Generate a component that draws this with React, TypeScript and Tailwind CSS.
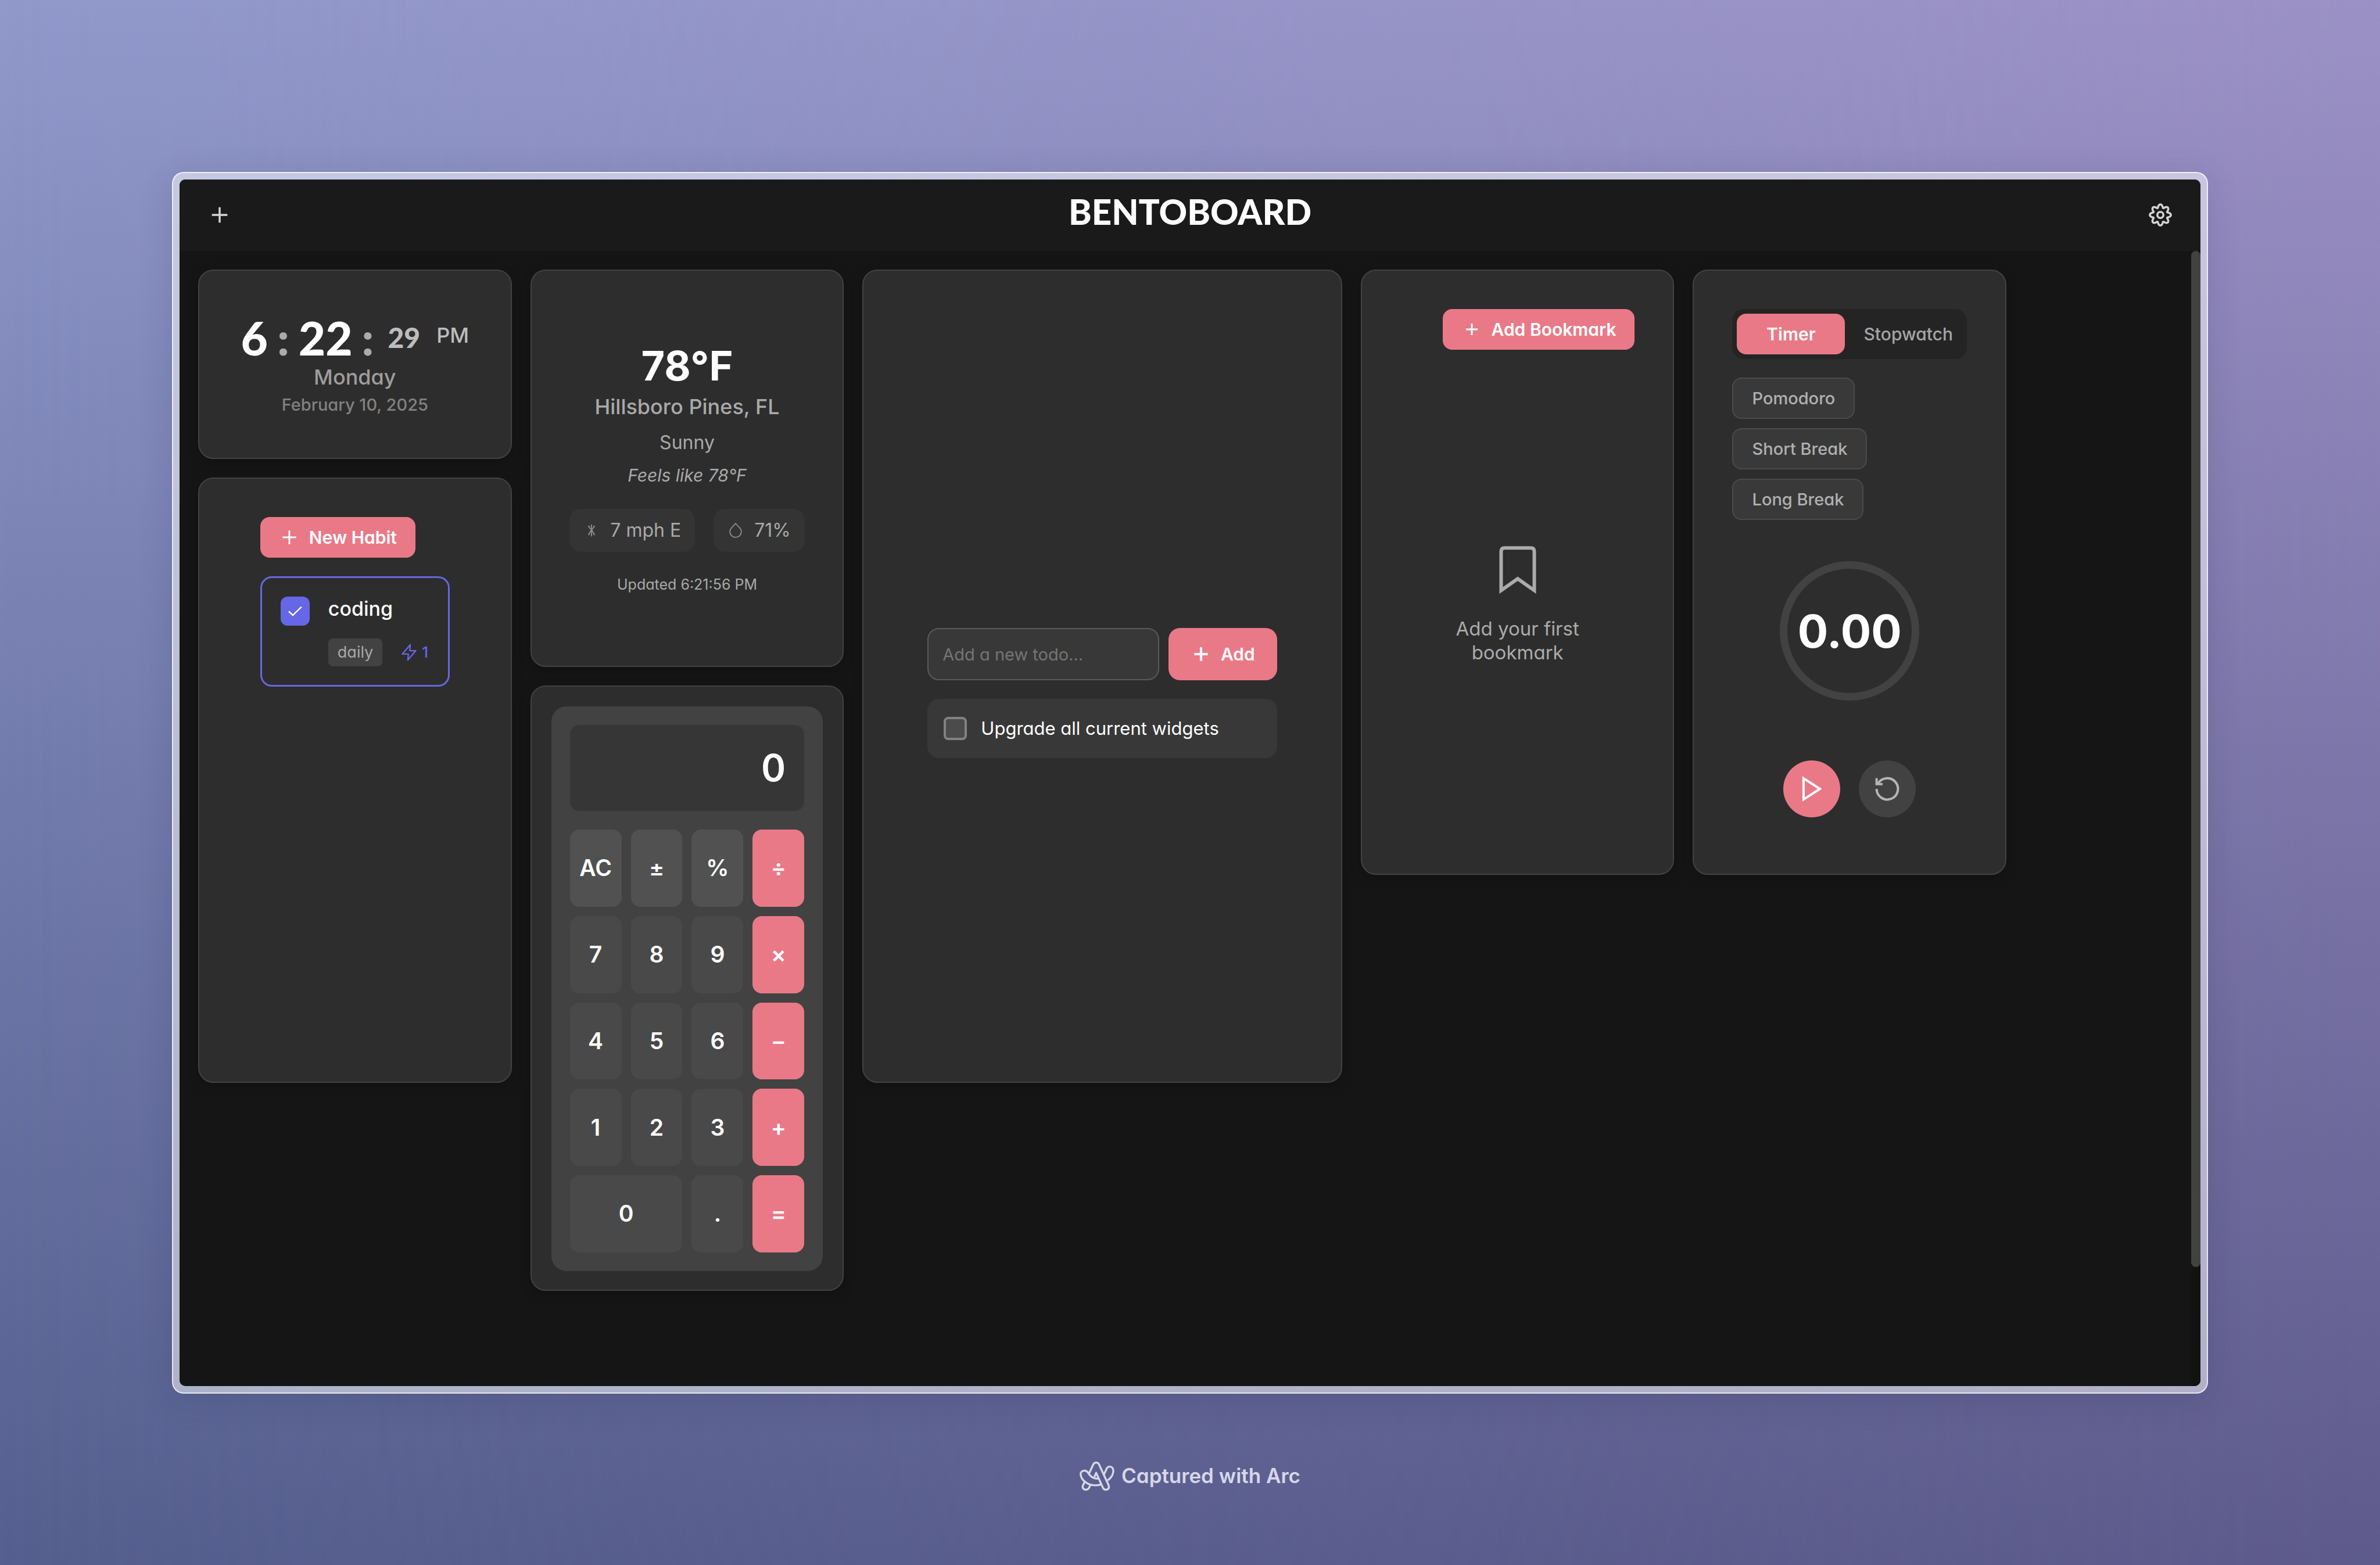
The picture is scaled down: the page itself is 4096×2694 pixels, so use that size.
import React from "react";

type IconProps = { className?: string };

function PlusIcon({ className, weight = 2 }: IconProps & { weight?: number }) {
  return (
    <svg viewBox="0 0 24 24" className={className} fill="none" stroke="currentColor" strokeWidth={weight} aria-hidden="true">
      <path d="M12 2v20M2 12h20" />
    </svg>
  );
}

function GearIcon({ className }: IconProps) {
  const points: string[] = [];
  for (let i = 0; i < 240; i++) {
    const t = (i / 240) * Math.PI * 2;
    const r = 19.2 + 3.4 * Math.cos(8 * t);
    const a = t + 0.035 * Math.sin(8 * t);
    points.push(`${(25 + r * Math.sin(a)).toFixed(2)},${(25 - r * Math.cos(a)).toFixed(2)}`);
  }
  return (
    <svg viewBox="0 0 50 50" className={className} fill="none" stroke="currentColor" strokeWidth="4.400" strokeLinejoin="round" aria-hidden="true">
      <polygon points={points.join(" ")} />
      <circle cx="25" cy="25" r="6.500" />
    </svg>
  );
}

function WindIcon({ className }: IconProps) {
  return (
    <svg viewBox="0 0 28 28" className={className} fill="none" stroke="currentColor" strokeWidth="2.500" aria-hidden="true">
      <path d="M14 1v26M7 4l1.500 1.500C10 8 11 11 14 13.500C17 11 18 8 19.500 5.500L21 4M7 24l1.500-1.500C10 19 11 16 14 13.500C17 16 18 19 19.500 22.500L21 24" />
      <path d="M7 7l3-2.500M21 7l-3-2.500M7 21l3 2.500M21 21l-3 2.500" strokeWidth="1.500" />
    </svg>
  );
}

function DropIcon({ className }: IconProps) {
  return (
    <svg viewBox="0 0 28 34" className={className} fill="none" stroke="currentColor" strokeWidth="2.200" aria-hidden="true">
      <path d="M14 2.500L21.500 10.500C24 13 26 16 26 19.500A12 12 0 0 1 2 19.500C2 16 4 13 6.500 10.500Z" />
    </svg>
  );
}

function BoltIcon({ className }: IconProps) {
  return (
    <svg viewBox="0 0 32 36" className={className} fill="none" stroke="currentColor" strokeWidth="2.800" strokeLinejoin="round" aria-hidden="true">
      <path d="M18.500 2L2 21.500H14.500L13.500 34L30 14.500H17.500Z" />
    </svg>
  );
}

function CheckIcon({ className }: IconProps) {
  return (
    <svg viewBox="0 0 24 18" className={className} fill="none" stroke="currentColor" strokeWidth="2.400" aria-hidden="true">
      <path d="M1 9.500L8 16L23 1.500" />
    </svg>
  );
}

function BookmarkIcon({ className }: IconProps) {
  return (
    <svg viewBox="0 0 79 102" className={className} fill="none" stroke="currentColor" strokeWidth="7.500" aria-hidden="true">
      <path d="M4 95V11.500Q4 4 11.500 4H67.500Q75 4 75 11.500V95L39.500 70Z" />
    </svg>
  );
}

function PlayIcon({ className }: IconProps) {
  return (
    <svg viewBox="0 0 42 55" className={className} fill="none" stroke="currentColor" strokeWidth="5" aria-hidden="true">
      <path d="M2.500 4.800V50.200L37.500 27.500Z" />
    </svg>
  );
}

function ResetIcon({ className }: IconProps) {
  return (
    <svg viewBox="-26 -26 52 52" className={className} fill="none" stroke="currentColor" strokeWidth="5" aria-hidden="true">
      <path d="M-22.700 0A22.700 22.700 0 1 0 -19.700 -11.300" />
      <path d="M-22.700 -23V-10.300H-10" />
    </svg>
  );
}

function ArcLogo({ className }: IconProps) {
  return (
    <svg viewBox="0 0 74 62" className={className} fill="none" stroke="currentColor" strokeWidth="4.200" strokeLinejoin="round" aria-hidden="true">
      <path d="M20 25.500L28.700 6.700C31.500 0.500 38.800 0.500 41.600 6.700L61.500 50C64 56 61 60 56.500 60C53 60 51 58.800 49.500 55.700L35.200 24L31.200 33" />
      <path d="M40.500 36C30 37.500 22.500 31.500 18 24C13 16 1 19 2.100 27.500C3 39 16 50.500 33 50.700Q40 50.700 46 48.500" />
      <path d="M10.400 43.500L7.400 50C4.500 56 8 60 13 60C16.500 60 18.800 58.500 20.300 55.300L23.300 49.500" />
      <path d="M52 27.500L57.300 15.500C60 9.500 66 9.700 69.500 13C73 17 72 23 69.800 28.500Q66 36 59.500 40" />
    </svg>
  );
}

const CARD =
  "rounded-[26px] border-2 border-[#424242] bg-[#2d2d2d] shadow-[0_6px_20px_rgba(0,0,0,0.2)] min-w-0";
const SMALL_PRIMARY =
  "flex h-[70px] items-center gap-4 rounded-2xl bg-[#ea7987] px-8 text-[30px] leading-10 font-semibold text-white";

function ClockCard() {
  return (
    <section className={`${CARD} col-span-2 flex flex-col items-center justify-center pb-1`}>
      <div className="flex items-center justify-center gap-4 font-['Lato',sans-serif] text-[80px] leading-[88px] font-black text-white">
        <span>6</span>
        <span className="text-[#ababab]">:</span>
        <span>22</span>
        <span className="text-[#ababab]">:</span>
        <span className="pl-2 text-[48px] text-[#bcbcbc]">29</span>
        <span className="pb-2 pl-3 font-['Inter',sans-serif] text-[36px] font-medium text-[#bcbcbc]">PM</span>
      </div>
      <p className="text-[36px] leading-10 font-medium text-[#9d9d9d]">Monday</p>
      <p className="mt-2 text-[29px] leading-10 font-medium text-[#818181]">February 10, 2025</p>
    </section>
  );
}

function HabitCard() {
  return (
    <section className={`${CARD} col-span-2 row-span-3 flex flex-col items-center py-[66px]`}>
      <div className="flex w-[326px] flex-col items-start gap-8">
        <button type="button" className={SMALL_PRIMARY}>
          <PlusIcon className="size-9 p-1" weight={2.5} />
          New Habit
        </button>
        <div className="flex w-full items-start gap-8 rounded-[20px] border-[3px] border-[#6667e2] p-8">
          <span className="relative grid size-[50px] shrink-0 place-items-center">
            <input
              id="habit-coding"
              type="checkbox"
              defaultChecked
              className="size-[50px] appearance-none rounded-xl bg-[#6667e6]"
            />
            <CheckIcon className="pointer-events-none absolute w-6 text-white" />
          </span>
          <div className="min-w-0 flex-1">
            <label htmlFor="habit-coding" className="block text-[34px] leading-[42px] font-medium text-white">
              coding
            </label>
            <div className="mt-[30px] flex items-center gap-8">
              <span className="rounded-lg bg-[#424242] px-4 py-1 text-[27px] leading-10 text-[#a9a9a9]">daily</span>
              <span className="flex items-center gap-2 text-[26px] leading-10 font-medium text-[#6667e2]">
                <BoltIcon className="h-[30px] w-7" />1
              </span>
            </div>
          </div>
        </div>
      </div>
    </section>
  );
}

function WeatherCard() {
  return (
    <section className={`${CARD} col-span-2 row-span-2 flex flex-col items-center justify-center text-[#a9a9a9]`}>
      <p className="text-[70px] leading-[80px] font-bold text-white">78°F</p>
      <p className="mt-2 text-[36px] leading-11 font-medium">Hillsboro Pines, FL</p>
      <p className="mt-5 text-[32px] leading-10">Sunny</p>
      <p className="mt-[18px] text-[30px] leading-9 italic">Feels like 78°F</p>
      <div className="mt-10 flex gap-8">
        <span className="flex h-[74px] items-center gap-[18px] rounded-[20px] bg-[#343434] px-6 text-[32px]">
          <WindIcon className="size-7 p-[3px] text-[#8a8a8a]" />7 mph E
        </span>
        <span className="flex h-[74px] items-center gap-[18px] rounded-[20px] bg-[#343434] px-6 text-[32px]">
          <DropIcon className="h-7 w-7 text-[#8a8a8a]" />
          71%
        </span>
      </div>
      <p className="mt-10 text-[25px] leading-8">Updated 6:21:56 PM</p>
    </section>
  );
}

const KEYS: { label: string; kind: "fn" | "num" | "op"; wide?: boolean }[] = [
  { label: "AC", kind: "fn" },
  { label: "±", kind: "fn" },
  { label: "%", kind: "fn" },
  { label: "÷", kind: "op" },
  { label: "7", kind: "num" },
  { label: "8", kind: "num" },
  { label: "9", kind: "num" },
  { label: "×", kind: "op" },
  { label: "4", kind: "num" },
  { label: "5", kind: "num" },
  { label: "6", kind: "num" },
  { label: "−", kind: "op" },
  { label: "1", kind: "num" },
  { label: "2", kind: "num" },
  { label: "3", kind: "num" },
  { label: "+", kind: "op" },
  { label: "0", kind: "num", wide: true },
  { label: ".", kind: "num" },
  { label: "=", kind: "op" },
];

const KEY_COLORS = { fn: "bg-[#515151]", num: "bg-[#494949]", op: "bg-[#ea7987]" };

function CalculatorCard() {
  return (
    <section className={`${CARD} col-span-2 row-span-3 flex px-[34px] pt-[34px] pb-8`}>
      <div className="flex flex-1 flex-col gap-8 rounded-[26px] bg-[#424242] p-8">
        <output className="flex h-[148px] items-center justify-end rounded-2xl bg-[#363636] px-8 text-[64px] font-semibold text-white">
          0
        </output>
        <div className="grid flex-1 auto-rows-fr grid-cols-4 gap-4">
          {KEYS.map((k) => (
            <button
              key={k.label}
              type="button"
              className={`${k.wide ? "col-span-2" : ""} ${KEY_COLORS[k.kind]} rounded-2xl text-[39px] font-semibold text-white`}
            >
              {k.label}
            </button>
          ))}
        </div>
      </div>
    </section>
  );
}

function TodoCard() {
  return (
    <section className={`${CARD} col-span-3 row-span-4 flex flex-col justify-center gap-8 px-[110px] pt-[58px]`}>
      <form className="flex gap-4" onSubmit={(e) => e.preventDefault()}>
        <input
          type="text"
          aria-label="New todo"
          placeholder="Add a new todo..."
          className="h-[90px] min-w-0 flex-1 rounded-[20px] border-2 border-[#5a5a5a] bg-[#383838] px-6 text-[29px] text-white placeholder:text-[#757575]"
        />
        <button
          type="submit"
          className="flex h-[90px] items-center gap-4 rounded-[20px] bg-[#ea7987] px-[38px] text-[30px] font-semibold text-white"
        >
          <PlusIcon className="size-9 p-1" weight={3.5} />
          Add
        </button>
      </form>
      <div className="flex h-[102px] items-center gap-6 rounded-[20px] bg-[#383838] px-7">
        <input
          id="todo-upgrade"
          type="checkbox"
          className="size-10 appearance-none rounded-lg border-4 border-[#828282] bg-[#4b4b4b]"
        />
        <label htmlFor="todo-upgrade" className="text-[31px] leading-10 text-white">
          Upgrade all current widgets
        </label>
      </div>
    </section>
  );
}

function BookmarkCard() {
  return (
    <section className={`${CARD} col-span-2 row-span-3 flex flex-col p-[66px]`}>
      <button type="button" className={`${SMALL_PRIMARY} self-end`}>
        <PlusIcon className="size-9 p-[6px]" weight={3} />
        Add Bookmark
      </button>
      <div className="mt-11 flex flex-1 flex-col items-center justify-center gap-10 text-[#ababab]">
        <BookmarkIcon className="h-[82px] w-16" />
        <p className="w-64 text-center text-[33px] leading-[41px]">Add your first bookmark</p>
      </div>
    </section>
  );
}

function TimerCard() {
  return (
    <section className={`${CARD} col-span-2 row-span-3 flex flex-col p-[66px]`}>
      <div className="flex h-[86px] rounded-[20px] bg-[#242424] p-2 text-[30px]">
        <button type="button" className="w-[186px] rounded-2xl bg-[#ea7987] font-semibold text-white">
          Timer
        </button>
        <button type="button" className="flex-1 pl-4 font-medium text-[#a5a5a5]">
          Stopwatch
        </button>
      </div>
      <div className="mt-8 flex flex-col items-start gap-4">
        {["Pomodoro", "Short Break", "Long Break"].map((label) => (
          <button
            key={label}
            type="button"
            className="h-[71px] rounded-2xl border-2 border-[#4b4b4b] bg-[#393939] px-8 text-[29px] font-medium text-[#b0b0b0]"
          >
            {label}
          </button>
        ))}
      </div>
      <div className="mt-[71px] flex size-60 items-center justify-center self-center rounded-full border-[13px] border-[#424242] text-[78px] font-bold text-white">
        0.00
      </div>
      <div className="mt-[103px] flex justify-center gap-8">
        <button
          type="button"
          aria-label="Start"
          className="flex size-[98px] items-center justify-center rounded-full bg-[#ea7987] text-white"
        >
          <PlayIcon className="h-11" />
        </button>
        <button
          type="button"
          aria-label="Reset"
          className="flex size-[98px] items-center justify-center rounded-full bg-[#424242] text-[#b5b5b5]"
        >
          <ResetIcon className="size-[42px]" />
        </button>
      </div>
    </section>
  );
}

export default function App() {
  return (
    <div className="relative isolate flex h-screen flex-col overflow-hidden bg-linear-to-b from-[#9199cb] to-[#55608f] px-[296px] pt-[296px] font-['Inter','Open_Sans',sans-serif] [font-feature-settings:'cv11']">
      <div className="absolute inset-0 -z-10 bg-linear-to-b from-[#9c91c6] to-[#5e5b8c] [mask-image:linear-gradient(to_right,transparent,black)]" />

      <div className="flex min-h-0 flex-1 rounded-[20px] border-2 border-white/70 bg-white/50 p-[11px] shadow-[0_10px_60px_rgba(30,25,70,0.14)]">
        <div className="flex min-w-0 flex-1 flex-col overflow-hidden rounded-[10px] bg-[#151515]">
          <header className="flex h-[123px] shrink-0 items-center justify-between bg-[#1a1a1a] px-[49px] pb-[2px] text-[#d4d4d4]">
            <button type="button" aria-label="Add widget" className="grid size-10 place-items-center">
              <PlusIcon className="size-8" weight={2.6} />
            </button>
            <h1 className="pb-3 font-['Lato',sans-serif] text-[60px] leading-[72px] font-black text-white">
              BENTOBOARD
            </h1>
            <button type="button" aria-label="Settings" className="grid size-10 place-items-center">
              <GearIcon className="size-10" />
            </button>
          </header>
          <div className="flex min-h-0 flex-1">
            <main className="grid min-w-0 flex-1 grid-flow-dense auto-rows-[326px] grid-cols-12 content-start gap-8 p-8">
              <ClockCard />
              <WeatherCard />
              <TodoCard />
              <BookmarkCard />
              <TimerCard />
              <HabitCard />
              <CalculatorCard />
            </main>
            <div className="w-4 bg-[#121212]">
              <div className="h-[89.5%] rounded-full bg-[#424242]" />
            </div>
          </div>
        </div>
      </div>

      <footer className="flex h-[295px] shrink-0 items-center justify-center gap-3 pb-3 text-[35px] font-semibold text-[#d6d7e8]">
        <ArcLogo className="h-[50px] w-[60px]" />
        Captured with Arc
      </footer>
    </div>
  );
}
